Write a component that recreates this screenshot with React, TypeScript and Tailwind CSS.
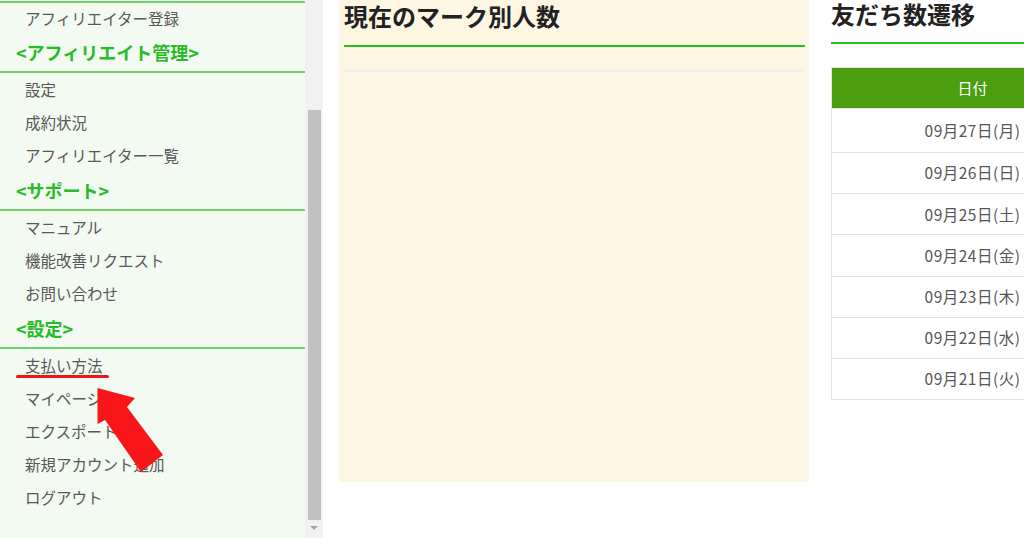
import React from "react";

const font = { fontFamily: '"Noto Sans CJK JP", "Noto Sans", sans-serif' };

type Entry = { kind: "item" | "header"; text: string; first?: boolean };

const entries: Entry[] = [
  { kind: "item", text: "アフィリエイター登録", first: true },
  { kind: "header", text: "<アフィリエイト管理>" },
  { kind: "item", text: "設定" },
  { kind: "item", text: "成約状況" },
  { kind: "item", text: "アフィリエイター一覧" },
  { kind: "header", text: "<サポート>" },
  { kind: "item", text: "マニュアル" },
  { kind: "item", text: "機能改善リクエスト" },
  { kind: "item", text: "お問い合わせ" },
  { kind: "header", text: "<設定>" },
  { kind: "item", text: "支払い方法" },
  { kind: "item", text: "マイページ" },
  { kind: "item", text: "エクスポート" },
  { kind: "item", text: "新規アカウント追加" },
  { kind: "item", text: "ログアウト" },
];

const dates = [
  "09月27日(月)",
  "09月26日(日)",
  "09月25日(土)",
  "09月24日(金)",
  "09月23日(木)",
  "09月22日(水)",
  "09月21日(火)",
];

export default function App() {
  return (
    <div
      className="relative flex w-[1024px] h-[538px] overflow-hidden bg-white"
      style={font}
    >
      {/* Sidebar */}
      <div className="w-[305px] h-full flex-none bg-[#f3faf1] flex flex-col">
        <div className="mt-[1px] h-[2px] bg-[#6bd46b]" />
        {entries.map((e, i) =>
          e.kind === "item" ? (
            <div
              key={i}
              className={`${e.first ? "h-[31px]" : "h-[33px]"} flex items-center pl-[25px] text-[15.5px] text-[#585858]`}
            >
              {e.text}
            </div>
          ) : (
            <div
              key={i}
              className="h-[39px] flex items-center pl-[16px] border-b-2 border-[#6bd46b] text-[18px] font-bold text-[#27bb27]"
            >
              {e.text}
            </div>
          )
        )}
      </div>

      {/* Scrollbar */}
      <div className="w-[18px] h-full flex-none bg-[#f1f1f1] flex flex-col items-center">
        <div className="mt-[110px] w-[13px] h-[410px] bg-[#c1c1c1]" />
        <div className="mt-[6px] w-0 h-0 border-l-[4px] border-r-[4px] border-t-[4px] border-l-transparent border-r-transparent border-t-[#a3a3a3]" />
      </div>

      {/* Main */}
      <div className="flex flex-none ml-[16px] gap-[22px] items-start">
        <div className="w-[470px] h-[482px] flex-none bg-[#fdf6e3] pl-[5px] pr-[4px]">
          <div className="h-[45px] pb-[13px] flex items-center text-[24px] leading-[28px] font-bold text-[#222222]">
            現在のマーク別人数
          </div>
          <div className="h-[2px] bg-[#22c022]" />
          <div className="mt-[22px] h-[3px] bg-[#f0efeb]" />
        </div>

        <div className="w-[400px] flex-none">
          <div className="h-[42px] pb-[14px] flex items-center text-[24px] leading-[28px] font-bold text-[#222222]">
            友だち数遷移
          </div>
          <div className="h-[2px] bg-[#22c022]" />
          <div className="mt-[23px] w-[400px] border border-[#e3e3e3]">
            <div className="h-[40px] flex bg-[#4c9e0e] text-white text-[15px]">
              <div className="w-[281px] flex items-center justify-center">
                日付
              </div>
              <div className="flex-1" />
            </div>
            {dates.map((d, i) => (
              <div
                key={d}
                className={`${i === 0 ? "h-[44px]" : "h-[41.2px]"} flex border-t border-[#e3e3e3] text-[15.5px] tracking-[0.5px] text-[#555555]`}
              >
                <div className="w-[281px] flex items-center justify-center">
                  {d}
                </div>
                <div className="flex-1" />
              </div>
            ))}
          </div>
        </div>
      </div>

      {/* Red annotation: underline */}
      <div className="absolute left-[16px] top-[374.5px] w-[93px] h-[3.5px] rounded-full bg-[#ee1519]" />

      {/* Red annotation: arrow */}
      <svg
        className="absolute left-0 top-0 pointer-events-none"
        width="1024"
        height="538"
        viewBox="0 0 1024 538"
      >
        <polygon
          points="97.5,388 135,398 127,407 163,455 141,472 105,420 97.5,424"
          fill="#f8161b"
        />
      </svg>
    </div>
  );
}
